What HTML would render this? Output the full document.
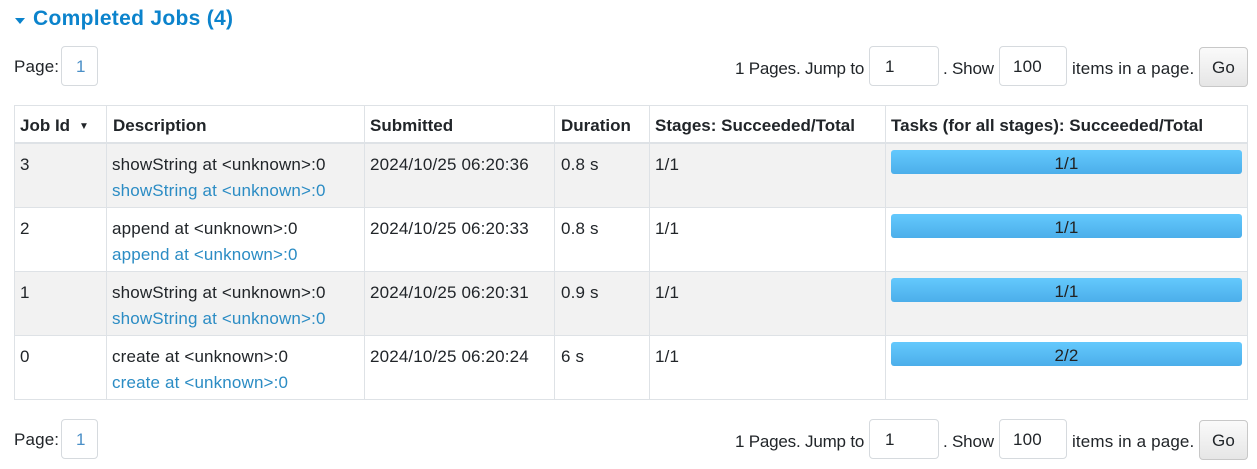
<!DOCTYPE html>
<html><head><meta charset="utf-8"><style>
*{box-sizing:border-box;margin:0;padding:0}
body{width:1257px;height:469px;background:#fff;font-family:"Liberation Sans","DejaVu Sans",sans-serif;font-size:17px;letter-spacing:0.15px;color:#212529;position:relative;overflow:hidden}
.a{position:absolute;white-space:nowrap}
.j{letter-spacing:-0.2px}
h4{position:absolute;left:14px;top:7px;font-size:21px;letter-spacing:0.3px;font-weight:bold;color:#0b83cc}
.tri{position:absolute;left:15px;top:18px;width:0;height:0;border-left:5px solid transparent;border-right:5px solid transparent;border-top:6px solid #0b83cc}
.box{position:absolute;border:1px solid #d6dade;border-radius:4px;height:40px;line-height:40px;padding-left:15px}
.go{position:absolute;border:1px solid #c8c8c8;border-radius:4px;background:linear-gradient(#fafafa,#e6e6e6);height:40px;line-height:40px;text-align:center;width:49px}
.hl{position:absolute;background:#dee2e6}
.bar{position:absolute;left:891px;width:351px;height:24px;border-radius:3px;background:linear-gradient(#64c9fd,#4caeea);text-align:center;line-height:28px;color:#222}
.lk{color:#2b8cc4}
b{font-weight:bold;letter-spacing:0}
</style></head><body>
<div class="tri"></div><h4 style="left:33px">Completed Jobs (4)</h4>

<div class="a" style="left:14px;top:57px">Page:</div>
<div class="box" style="left:61px;top:46px;width:37px;color:#4a8fc7;padding-left:14px">1</div>
<div class="a j" style="left:735px;top:59px">1 Pages. Jump to</div>
<div class="box" style="left:869px;top:46px;width:70px">1</div>
<div class="a j" style="left:943px;top:59px">. Show</div>
<div class="box" style="left:999px;top:46px;width:68px;padding-left:13px">100</div>
<div class="a" style="left:1072px;top:59px">items in a page.</div>
<div class="go" style="left:1199px;top:47px">Go</div>

<div style="position:absolute;left:14px;top:143px;width:1234px;height:64px;background:#f2f2f2"></div>
<div style="position:absolute;left:14px;top:271px;width:1234px;height:64px;background:#f2f2f2"></div>
<div class="hl" style="left:14px;top:105px;width:1234px;height:1px"></div>
<div class="hl" style="left:14px;top:142px;width:1234px;height:2px"></div>
<div class="hl" style="left:14px;top:207px;width:1234px;height:1px"></div>
<div class="hl" style="left:14px;top:271px;width:1234px;height:1px"></div>
<div class="hl" style="left:14px;top:335px;width:1234px;height:1px"></div>
<div class="hl" style="left:14px;top:399px;width:1234px;height:1px"></div>
<div class="hl" style="left:14px;top:105px;width:1px;height:295px"></div>
<div class="hl" style="left:106px;top:105px;width:1px;height:295px"></div>
<div class="hl" style="left:364px;top:105px;width:1px;height:295px"></div>
<div class="hl" style="left:554px;top:105px;width:1px;height:295px"></div>
<div class="hl" style="left:649px;top:105px;width:1px;height:295px"></div>
<div class="hl" style="left:885px;top:105px;width:1px;height:295px"></div>
<div class="hl" style="left:1247px;top:105px;width:1px;height:295px"></div>

<div class="a" style="left:20px;top:116px"><b>Job Id</b> <span style="font-size:10px;position:relative;top:-2px;margin-left:4px">▼</span></div>
<div class="a" style="left:113px;top:116px"><b>Description</b></div>
<div class="a" style="left:370px;top:116px"><b>Submitted</b></div>
<div class="a" style="left:561px;top:116px"><b>Duration</b></div>
<div class="a" style="left:655px;top:116px"><b>Stages: Succeeded/Total</b></div>
<div class="a" style="left:891px;top:116px"><b>Tasks (for all stages): Succeeded/Total</b></div>

<div class="a" style="left:20px;top:155px">3</div>
<div class="a" style="left:112px;top:155px">showString at &lt;unknown&gt;:0</div>
<div class="a lk" style="left:112px;top:181px">showString at &lt;unknown&gt;:0</div>
<div class="a" style="left:370px;top:155px">2024/10/25 06:20:36</div>
<div class="a" style="left:561px;top:155px">0.8 s</div>
<div class="a" style="left:655px;top:155px">1/1</div>
<div class="bar" style="top:150px">1/1</div>

<div class="a" style="left:20px;top:219px">2</div>
<div class="a" style="left:112px;top:219px">append at &lt;unknown&gt;:0</div>
<div class="a lk" style="left:112px;top:245px">append at &lt;unknown&gt;:0</div>
<div class="a" style="left:370px;top:219px">2024/10/25 06:20:33</div>
<div class="a" style="left:561px;top:219px">0.8 s</div>
<div class="a" style="left:655px;top:219px">1/1</div>
<div class="bar" style="top:214px">1/1</div>

<div class="a" style="left:20px;top:283px">1</div>
<div class="a" style="left:112px;top:283px">showString at &lt;unknown&gt;:0</div>
<div class="a lk" style="left:112px;top:309px">showString at &lt;unknown&gt;:0</div>
<div class="a" style="left:370px;top:283px">2024/10/25 06:20:31</div>
<div class="a" style="left:561px;top:283px">0.9 s</div>
<div class="a" style="left:655px;top:283px">1/1</div>
<div class="bar" style="top:278px">1/1</div>

<div class="a" style="left:20px;top:347px">0</div>
<div class="a" style="left:112px;top:347px">create at &lt;unknown&gt;:0</div>
<div class="a lk" style="left:112px;top:373px">create at &lt;unknown&gt;:0</div>
<div class="a" style="left:370px;top:347px">2024/10/25 06:20:24</div>
<div class="a" style="left:561px;top:347px">6 s</div>
<div class="a" style="left:655px;top:347px">1/1</div>
<div class="bar" style="top:342px">2/2</div>

<div class="a" style="left:14px;top:430px">Page:</div>
<div class="box" style="left:61px;top:419px;width:37px;color:#4a8fc7;padding-left:14px">1</div>
<div class="a j" style="left:735px;top:432px">1 Pages. Jump to</div>
<div class="box" style="left:869px;top:419px;width:70px">1</div>
<div class="a j" style="left:943px;top:432px">. Show</div>
<div class="box" style="left:999px;top:419px;width:68px;padding-left:13px">100</div>
<div class="a" style="left:1072px;top:432px">items in a page.</div>
<div class="go" style="left:1199px;top:420px">Go</div>
</body></html>
